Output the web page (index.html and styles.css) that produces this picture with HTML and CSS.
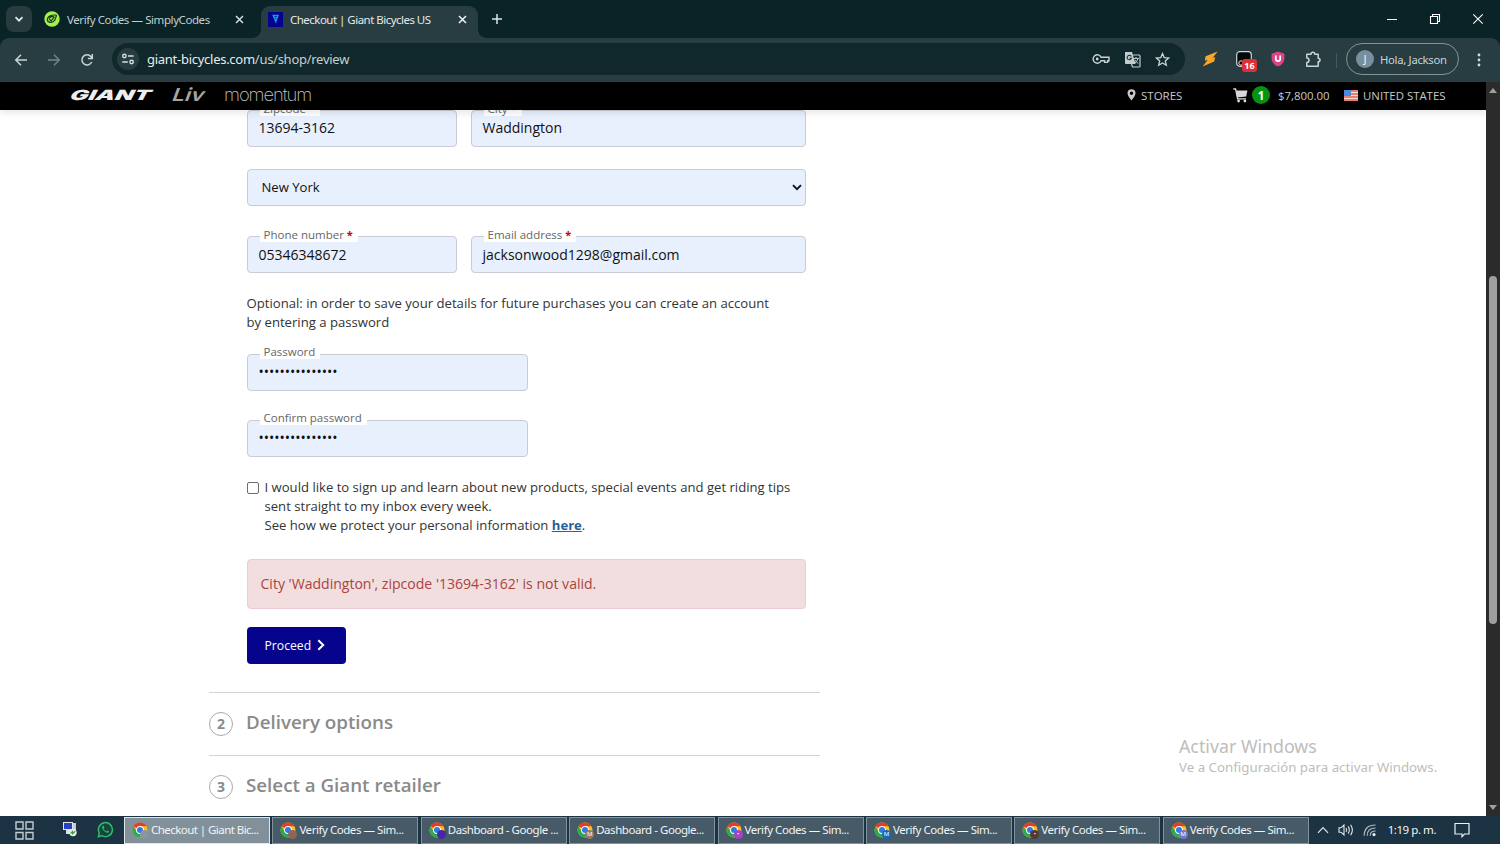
FILE: index.html
```
<!DOCTYPE html>
<html lang="en">
<head>
    <meta charset="UTF-8">
    <meta name="viewport" content="width=device-width, initial-scale=1.0">
    <link rel="stylesheet" href="styles.css">
    <title>Checkout | Giant Bicycles US</title>
</head>
<body>
    <svg class="defs" width="0" height="0">
        <symbol id="chrome" viewBox="0 0 16 16">
            <circle cx="8" cy="8" r="7.5" fill="#fbc116"/>
            <path d="M8 8 L1.5 4.25 A7.5 7.5 0 0 1 14.5 4.25 L8 4.25 Z" fill="#e33b2e"/>
            <path d="M1.5 4.25 A7.5 7.5 0 0 0 8 15.5 L11.2 9.9 L4.8 9.9 Z" fill="#2da94f"/>
            <circle cx="8" cy="8" r="3.9" fill="#fff"/>
            <circle cx="8" cy="8" r="3" fill="#3478e5"/>
        </symbol>
    </svg>

    <!-- Browser tabs -->
    <div class="tab-strip">
        <div class="tab-search">
            <svg width="10" height="10" viewBox="0 0 10 10"><path d="M1.5 3.2 L5 6.7 L8.5 3.2" fill="none" stroke="#e2eaea" stroke-width="1.7"/></svg>
        </div>
        <div class="tab">
            <svg class="favicon" width="16" height="16" viewBox="0 0 16 16">
                <circle cx="8" cy="8" r="7.7" fill="#a6f04c"/>
                <path d="M12.6 4.2 C9 3.6 4 4.6 3.4 8.2 C3 11.6 8.4 12.8 10.8 9.2 L12.6 4.2 M5.2 8.2 L7.2 9.8 L10.2 6.2 M10.4 5.8 C8 5.2 5.8 6 5.4 7.6" fill="none" stroke="#173d18" stroke-width="1.2"/>
            </svg>
            <span class="tab-title">Verify Codes — SimplyCodes</span>
            <svg class="close" width="9" height="9" viewBox="0 0 9 9"><path d="M1 1 L8 8 M8 1 L1 8" stroke="#d5dede" stroke-width="1.5"/></svg>
        </div>
        <div class="tab active">
            <svg class="favicon" width="15" height="15" viewBox="0 0 15 15">
                <rect width="15" height="15" fill="#06038d"/>
                <path d="M4.2 2.8 H11 L7.8 11.6 Z" fill="#1995ee"/>
                <path d="M6.6 4.6 H8.8 M7.2 6.4 H8.2" stroke="#06038d" stroke-width="0.8"/>
            </svg>
            <span class="tab-title">Checkout | Giant Bicycles US</span>
            <svg class="close" width="9" height="9" viewBox="0 0 9 9"><path d="M1 1 L8 8 M8 1 L1 8" stroke="#eef3f3" stroke-width="1.5"/></svg>
        </div>
        <svg class="new-tab" width="12" height="12" viewBox="0 0 12 12"><path d="M6 1 V11 M1 6 H11" stroke="#dde6e6" stroke-width="1.5"/></svg>
        <div class="window-buttons">
            <svg width="12" height="12" viewBox="0 0 12 12"><path d="M1 6.5 H11" stroke="#fff" stroke-width="1"/></svg>
            <svg width="12" height="12" viewBox="0 0 12 12"><path d="M1.5 3.5 H8.5 V10.5 H1.5 Z M3.5 3.5 V1.5 H10.5 V8.5 H8.5" fill="none" stroke="#fff" stroke-width="1.1"/></svg>
            <svg width="12" height="12" viewBox="0 0 12 12"><path d="M1.3 1.3 L10.7 10.7 M10.7 1.3 L1.3 10.7" stroke="#fff" stroke-width="1.1"/></svg>
        </div>
    </div>

    <!-- Toolbar -->
    <div class="toolbar-wrap">
        <div class="toolbar">
            <svg class="nav-icon" width="14" height="14" viewBox="0 0 14 14"><path d="M13 7 H2 M7 1.8 L1.8 7 L7 12.2" fill="none" stroke="#c9d6d6" stroke-width="1.5"/></svg>
            <svg class="nav-icon" width="14" height="14" viewBox="0 0 14 14"><path d="M1 7 H12 M7 1.8 L12.2 7 L7 12.2" fill="none" stroke="#71868a" stroke-width="1.5"/></svg>
            <svg class="nav-icon" width="14" height="14" viewBox="0 0 14 14"><path d="M11.7 9 A5.1 5.1 0 1 1 10.9 3.6 L12.2 5.2 M12.3 1 V5.4 H7.9" fill="none" stroke="#c9d6d6" stroke-width="1.5"/></svg>
            <div class="omnibox">
                <div class="site-info">
                    <svg width="14" height="14" viewBox="0 0 14 14"><g fill="none" stroke="#d5dfdf" stroke-width="1.4"><circle cx="3.4" cy="4" r="1.7"/><path d="M7 4 H12.6 M1.2 10 H6.8"/><circle cx="10.6" cy="10" r="1.7"/></g></svg>
                </div>
                <span class="url">giant-bicycles.com<span>/us/shop/review</span></span>
                <div class="omni-icons">
                    <svg width="18" height="12" viewBox="0 0 18 12"><g fill="none" stroke="#c9d6d6" stroke-width="1.4"><path d="M9.1 4.2 H17 V7.8 H15.6 V9.4 H12.6 V7.8 H9.1 A4.2 4.2 0 1 1 9.1 4.2 Z"/></g><circle cx="5.2" cy="6" r="1.4" fill="#c9d6d6"/></svg>
                    <svg width="17" height="17" viewBox="0 0 17 17"><path d="M1 1 H8 L11.5 13 H1.8 Q1 13 1 12 Z" fill="#c2cece"/><path d="M9 4 H15.2 Q16 4 16 5 V15.2 Q16 16 15 16 H8.5 L7.5 13" fill="none" stroke="#c2cece" stroke-width="1.2"/><path d="M7.3 5.6 A2.2 2.2 0 1 0 7.4 7.3 H5.5" fill="none" stroke="#1c3337" stroke-width="1.1"/><path d="M9.6 7.4 H14.8 M12 6 V7.4 M14 7.6 Q13 10.8 10.8 12.2 M10.8 8.8 Q12 11 14.4 12.6" fill="none" stroke="#c2cece" stroke-width="1"/></svg>
                    <svg width="15" height="15" viewBox="0 0 15 15"><path d="M7.5 1.6 L9.2 5.6 L13.6 6 L10.3 8.9 L11.3 13.2 L7.5 10.9 L3.7 13.2 L4.7 8.9 L1.4 6 L5.8 5.6 Z" fill="none" stroke="#c9d6d6" stroke-width="1.3"/></svg>
                </div>
            </div>
            <svg class="ext bolt" width="16" height="16" viewBox="0 0 16 16"><path d="M15.6 0.6 L3.6 5.2 L2.8 9.8 L5.8 8.8 L0.6 15.6 L12.2 10.4 L13.2 6 L10.6 7 Z" fill="#f9a72b"/></svg>
            <div class="ext counter">
                <svg width="16" height="16" viewBox="0 0 16 16"><rect x="0.7" y="0.7" width="14.6" height="14.6" rx="3" fill="#050808" stroke="#cdd8d8" stroke-width="1.2"/><circle cx="5" cy="12" r="2.2" fill="none" stroke="#eee"/></svg>
                <span class="count">16</span>
            </div>
            <svg class="ext shield" width="14" height="16" viewBox="0 0 14 16"><path d="M7 0.5 L13.4 2.8 V8 Q13 13 7 15.6 Q1 13 0.6 8 V2.8 Z" fill="#df4387"/><path d="M4.8 4.5 V8 Q4.8 10.2 7 10.2 Q9.2 10.2 9.2 8 V4.5" fill="none" stroke="#fff" stroke-width="1.7"/></svg>
            <svg class="ext puzzle" width="17" height="17" viewBox="0 0 17 17"><path d="M1.8 3.2 H6 A1.9 1.9 0 0 1 9.8 3.2 H13.2 V7.2 A1.8 1.8 0 0 1 13.2 10.8 V15.2 H1.8 V11.4 A2.2 2.2 0 0 0 1.8 7 Z" fill="none" stroke="#c9d6d6" stroke-width="1.5" stroke-linejoin="round"/></svg>
            <div class="separator"></div>
            <div class="profile"><span class="avatar">J</span><span class="hello">Hola, Jackson</span></div>
            <svg class="menu" width="4" height="14" viewBox="0 0 4 14" fill="#d5dede"><circle cx="2" cy="2" r="1.4"/><circle cx="2" cy="7" r="1.4"/><circle cx="2" cy="12" r="1.4"/></svg>
        </div>
    </div>

    <div class="viewport">
        <div class="page">
            <header class="site-header">
                <span class="logo giant">GIANT</span>
                <span class="logo liv">Liv</span>
                <span class="logo momentum">momentum</span>
                <div class="header-links">
                    <svg class="pin" width="9" height="12" viewBox="0 0 9 12"><path fill-rule="evenodd" d="M4.5 0.3 A4 4 0 0 1 8.5 4.3 Q8.3 7 4.5 11.6 Q0.7 7 0.5 4.3 A4 4 0 0 1 4.5 0.3 Z M4.5 2.6 A1.7 1.7 0 1 0 4.5 6 A1.7 1.7 0 1 0 4.5 2.6 Z" fill="#c9c9c9"/></svg>
                    <span class="stores">STORES</span>
                    <svg class="cart" width="15" height="15" viewBox="0 0 15 15"><path d="M0.3 1 H2.6 L4.6 10.8 H13" fill="none" stroke="#d8d8d8" stroke-width="1.3"/><path d="M3 2.4 H14.4 L13.2 8.4 L4.2 9.4 Z" fill="#d8d8d8"/><circle cx="5.6" cy="13" r="1.4" fill="#d8d8d8"/><circle cx="11.9" cy="13" r="1.4" fill="#d8d8d8"/></svg>
                    <span class="cart-count">1</span>
                    <span class="total">$7,800.00</span>
                    <svg class="flag" width="14" height="11" viewBox="0 0 14 11"><rect width="14" height="11" fill="#f7dcd6"/><path d="M0 1 H14 M0 4 H14 M0 7 H14 M0 10 H14" stroke="#e2604f" stroke-width="1.6"/><rect width="7" height="6" fill="#4a8be0"/></svg>
                    <span class="country">UNITED STATES</span>
                </div>
            </header>

            <main class="checkout">
                <form class="details">
                    <div class="row first-row">
                        <div class="field short"><label>Zipcode <b>*</b></label><span class="value">13694-3162</span></div>
                        <div class="field long"><label>City <b>*</b></label><span class="value">Waddington</span></div>
                    </div>
                    <div class="row select-row">
                        <div class="field select"><span>New York</span>
                            <svg width="10" height="7" viewBox="0 0 10 7"><path d="M1 1.2 L5 5.2 L9 1.2" fill="none" stroke="#111" stroke-width="1.9"/></svg>
                        </div>
                    </div>
                    <div class="row phone-row">
                        <div class="field short"><label>Phone number <b>*</b></label><span class="value">05346348672</span></div>
                        <div class="field long"><label>Email address <b>*</b></label><span class="value">jacksonwood1298@gmail.com</span></div>
                    </div>
                    <p class="optional">Optional: in order to save your details for future purchases you can create an account<br>by entering a password</p>
                    <div class="field password"><label>Password</label><span class="value dots">•••••••••••••••</span></div>
                    <div class="field password confirm"><label>Confirm password</label><span class="value dots">•••••••••••••••</span></div>
                    <div class="signup">
                        <span class="checkbox"></span>
                        <p>I would like to sign up and learn about new products, special events and get riding tips<br>sent straight to my inbox every week.<br>See how we protect your personal information <a href="#">here</a>.</p>
                    </div>
                    <div class="alert">City 'Waddington', zipcode '13694-3162' is not valid.</div>
                    <button type="button" class="proceed">Proceed
                        <svg width="8" height="12" viewBox="0 0 8 12"><path d="M1.3 1.2 L6.2 6 L1.3 10.8" fill="none" stroke="#fff" stroke-width="2"/></svg>
                    </button>
                </form>
                <section class="step"><span class="number">2</span><h2>Delivery options</h2></section>
                <section class="step"><span class="number">3</span><h2>Select a Giant retailer</h2></section>
            </main>

            <div class="watermark">
                <div class="wm-title">Activar Windows</div>
                <div class="wm-text">Ve a Configuración para activar Windows.</div>
            </div>
        </div>
        <div class="scrollbar">
            <svg width="8" height="5" viewBox="0 0 8 5"><path d="M0 5 L4 0 L8 5 Z" fill="#9f9f9f"/></svg>
            <div class="thumb"></div>
            <svg width="8" height="5" viewBox="0 0 8 5"><path d="M0 0 L4 5 L8 0 Z" fill="#9f9f9f"/></svg>
        </div>
    </div>

    <!-- Windows taskbar -->
    <div class="taskbar">
        <svg class="task-view" width="19" height="19" viewBox="0 0 19 19"><path d="M1 1 H8 V8 H1 Z M11 1 H18 V8 H11 Z M1 11.5 H8 V18 H1 Z M11 11.5 H18 V18 H11 Z" fill="none" stroke="#c5ccd0" stroke-width="1.4"/></svg>
        <svg class="remote" width="16" height="16" viewBox="0 0 16 16"><rect x="1" y="1" width="10" height="8" fill="#e1e5ea"/><rect x="2" y="2" width="8" height="6" fill="#2444c5"/><path d="M4 9 H9 L11 13 H4 Z" fill="#dde1e5"/><rect x="11" y="2" width="3" height="9" fill="#c8cdd3"/><circle cx="11" cy="11.6" r="3.7" fill="#e9f2e6"/><path d="M8.6 12.5 L10.6 10.4 V12.7 L13.4 10.2" fill="none" stroke="#3d9c38" stroke-width="1.2"/></svg>
        <svg class="whatsapp" width="17" height="17" viewBox="0 0 17 17"><path d="M1.3 15.7 L2.3 12 A7 7 0 1 1 5 14.7 Z" fill="#17443e" stroke="#2cbd68" stroke-width="1.5"/><path d="M6 4.8 Q4.7 5.6 5.2 7.3 Q6.4 10.5 9.6 11.8 Q11.6 12.1 12.2 10.4 L10.3 9.4 L9.3 10.4 Q7.4 9.5 6.6 7.8 L7.4 6.8 L6.7 4.8 Z" fill="#2cbd68"/></svg>
        <div class="tasks">
            <div class="task current"><svg width="16" height="16"><use href="#chrome"/></svg><i class="badge grey"></i><span>Checkout | Giant Bic...</span></div>
            <div class="task"><svg width="16" height="16"><use href="#chrome"/></svg><i class="badge brown"></i><span>Verify Codes — Sim...</span></div>
            <div class="task"><svg width="16" height="16"><use href="#chrome"/></svg><i class="badge indigo"></i><span>Dashboard - Google ...</span></div>
            <div class="task"><svg width="16" height="16"><use href="#chrome"/></svg><i class="badge tan">M</i><span>Dashboard - Google...</span></div>
            <div class="task"><svg width="16" height="16"><use href="#chrome"/></svg><i class="badge purple">•</i><span>Verify Codes — Sim...</span></div>
            <div class="task"><svg width="16" height="16"><use href="#chrome"/></svg><i class="badge blue">M</i><span>Verify Codes — Sim...</span></div>
            <div class="task"><svg width="16" height="16"><use href="#chrome"/></svg><i class="badge dark">•</i><span>Verify Codes — Sim...</span></div>
            <div class="task"><svg width="16" height="16"><use href="#chrome"/></svg><i class="badge violet">M</i><span>Verify Codes — Sim...</span></div>
        </div>
        <div class="tray">
            <svg width="12" height="8" viewBox="0 0 12 8"><path d="M1 6.8 L6 1.6 L11 6.8" fill="none" stroke="#e2e7ea" stroke-width="1.2"/></svg>
            <svg class="volume" width="17" height="14" viewBox="0 0 17 14"><g fill="none" stroke="#e2e7ea" stroke-width="1.1"><path d="M1 4.8 H3 L6 2 V12 L3 9.2 H1 Z M8 5 Q9.3 7 8 9 M10.2 3.4 Q12.4 7 10.2 10.6 M12.6 1.8 Q16.2 7 12.6 12.2"/></g></svg>
            <svg class="wifi" width="14" height="14" viewBox="0 0 14 14"><g fill="none" stroke="#aebbc2" stroke-width="1.2"><path d="M1.2 12.8 Q1.2 2 12.6 2 M4.2 12.8 Q4.2 5 12.6 5 M7.2 12.8 Q7.2 8 12.6 8"/></g><circle cx="11" cy="11.6" r="1.6" fill="#e9edef"/></svg>
            <span class="clock">1:19 p. m.</span>
            <svg class="notes" width="16" height="16" viewBox="0 0 16 16"><path d="M1 1.5 H15 V12 H10.5 L8 14.7 V12 H1 Z" fill="none" stroke="#eef1f3" stroke-width="1.2"/></svg>
        </div>
    </div>
</body>
</html>
```
FILE: styles.css
```
* {
    box-sizing: border-box;
}

body {
    display: flex;
    flex-direction: column;
    width: 1500px;
    height: 844px;
    margin: 0;
    overflow: hidden;
    font-family: 'Open Sans', sans-serif;
    background-color: #fff;
    color: #333;
}

svg {
    display: block;
    flex: none;
}

.defs {
    position: absolute;
}

/* Tabs */
.tab-strip {
    display: flex;
    align-items: flex-start;
    height: 38px;
    padding-left: 6px;
    background-color: #0a2326;
    font-family: 'Noto Sans', sans-serif;
}

.tab-search {
    display: flex;
    align-items: center;
    justify-content: center;
    width: 26px;
    height: 26px;
    margin-top: 6px;
    border-radius: 8px;
    background-color: #283c40;
}

.tab {
    display: flex;
    align-items: center;
    width: 229px;
    height: 32px;
    margin-top: 6px;
    padding: 0 17px 6px 12px;
    font-size: 11.5px;
    letter-spacing: -0.42px;
    color: #c3cfd0;
    white-space: nowrap;
}

.tab.active {
    position: relative;
    width: 217px;
    padding: 0 11px 6px 7px;
    border-radius: 9px 9px 0 0;
    background-color: #283d41;
    color: #e3eaea;
    letter-spacing: -0.52px;
}

/* curved feet of the active tab */
.tab.active::before,
.tab.active::after {
    content: '';
    position: absolute;
    bottom: 0;
    width: 8px;
    height: 8px;
}

.tab.active::before {
    left: -8px;
    background: radial-gradient(circle at 0 0, #0a2326 7.5px, #283d41 8px);
}

.tab.active::after {
    right: -8px;
    background: radial-gradient(circle at 100% 0, #0a2326 7.5px, #283d41 8px);
}

.tab-title {
    flex: 1;
    margin-left: 7px;
}

.new-tab {
    margin: 13px 0 0 13px;
}

.window-buttons {
    display: flex;
    gap: 31px;
    margin: 13px 16px 0 auto;
}

/* Toolbar */
.toolbar-wrap {
    height: 44px;
    background-color: #0a2326;
}

.toolbar {
    display: flex;
    align-items: center;
    height: 44px;
    padding-left: 14px;
    border-radius: 9px 9px 0 0;
    background-color: #283d41;
}

.nav-icon {
    margin-top: -1px;
    margin-right: 19px;
}

.nav-icon:nth-child(3) {
    margin-right: 18px;
}

.omnibox {
    display: flex;
    align-items: center;
    width: 1073px;
    height: 32px;
    margin-top: -2px;
    padding: 0 15px 0 5px;
    border-radius: 16px;
    background-color: #10272b;
}

.site-info {
    display: flex;
    align-items: center;
    justify-content: center;
    width: 22px;
    height: 22px;
    border-radius: 50%;
    background-color: #283d41;
}

.url {
    margin-left: 8px;
    font-family: 'Noto Sans', sans-serif;
    font-size: 13px;
    letter-spacing: -0.27px;
    color: #e6eded;
}

.url span {
    color: #c6d1d2;
}

.omni-icons {
    display: flex;
    align-items: center;
    gap: 14px;
    margin-left: auto;
}

.ext {
    margin-top: -2px;
}

.bolt {
    margin-left: 17px;
}

.counter {
    position: relative;
    margin-left: 18px;
}

.count {
    position: absolute;
    left: 6px;
    top: 8px;
    width: 15px;
    height: 13px;
    border-radius: 3px;
    background-color: #e02e35;
    color: #fff;
    font-size: 9px;
    font-weight: bold;
    line-height: 13px;
    text-align: center;
}

.shield {
    margin-left: 19px;
}

.puzzle {
    margin-left: 20px;
}

.separator {
    width: 1px;
    height: 15px;
    margin: 0 9px 0 14px;
    background-color: #46595d;
}

.profile {
    display: flex;
    align-items: center;
    width: 113px;
    height: 32px;
    margin-top: -2px;
    padding-left: 9px;
    border: 1px solid #849397;
    border-radius: 16px;
}

.avatar {
    width: 18px;
    height: 18px;
    border-radius: 50%;
    background-color: #788f9d;
    color: #fff;
    font-size: 10px;
    line-height: 18px;
    text-align: center;
}

.hello {
    margin-left: 6px;
    font-family: 'Noto Sans', sans-serif;
    font-size: 11.3px;
    letter-spacing: -0.3px;
    color: #c6d2d4;
    white-space: nowrap;
}

.menu {
    margin-left: 18px;
    margin-top: -1px;
}

/* Page */
.viewport {
    display: flex;
    height: 734px;
}

.page {
    position: relative;
    width: 1486px;
    overflow: hidden;
}

.site-header {
    position: relative;
    z-index: 2;
    display: flex;
    align-items: center;
    height: 28px;
    padding: 0 0 2px 71px;
    background-color: #000;
    box-shadow: 0 2px 8px rgba(0, 0, 0, 0.12);
    color: #c8c8c8;
    font-size: 11.7px;
    white-space: nowrap;
}

.logo {
    line-height: 26px;
    transform-origin: left center;
}

.giant {
    width: 102px;
    font-family: Inter, sans-serif;
    font-size: 14px;
    font-weight: 900;
    color: #eee;
    transform: skewX(-28deg) scaleX(1.74);
}

.liv {
    width: 51px;
    font-family: Inter, sans-serif;
    font-size: 18px;
    font-weight: 600;
    color: #a5a5a5;
    transform: skewX(-20deg) scaleX(1.25);
}

.momentum {
    font-family: Inter, sans-serif;
    font-size: 17px;
    font-weight: 200;
    color: #c0c0c0;
    letter-spacing: -1px;
    transform: scaleX(1.08);
}

.header-links {
    display: flex;
    align-items: center;
    margin-left: auto;
    padding-right: 42px;
}

.stores {
    width: 41px;
    margin: 0 51px 0 5px;
    font-size: 11.5px;
}

.cart-count {
    width: 18px;
    height: 18px;
    margin: 0 8px 0 4px;
    border-radius: 50%;
    background-color: #079311;
    color: #fff;
    font-weight: bold;
    line-height: 18px;
    text-align: center;
}

.total {
    width: 52px;
    font-size: 11.4px;
}

.flag {
    margin: 0 5px 0 14px;
}

.country {
    width: 81px;
    font-size: 11.4px;
}

.checkout {
    width: 611px;
    margin-left: 209px;
}

.details {
    height: 582px;
    padding-left: 37.5px;
}

.row {
    display: flex;
    gap: 14px;
}

.field {
    position: relative;
    height: 37px;
    border: 1px solid #c9ccd3;
    border-radius: 4px;
    background-color: #e8f0fe;
}

.short {
    width: 210px;
}

.long {
    width: 335px;
}

/* label sits on the top border of its field */
.field label {
    position: absolute;
    left: 12px;
    top: -10px;
    height: 15px;
    padding: 0 5px 0 4px;
    background-color: #fff;
    color: #666;
    font-size: 11.5px;
    line-height: 15px;
    white-space: nowrap;
}

.field label b {
    color: #c00;
    font-size: 11px;
}

.value {
    display: block;
    padding-left: 11px;
    color: #111;
    font-size: 14px;
    line-height: 35px;
}

.first-row .value {
    line-height: 33px;
}

.select-row {
    margin-top: 22px;
}

.select {
    display: flex;
    align-items: center;
    justify-content: space-between;
    width: 559px;
    padding: 0 3px 1px 14px;
    color: #111;
    font-size: 13.1px;
}

.phone-row {
    margin-top: 30px;
}

.optional {
    margin: 21px 0 0;
    font-size: 13.13px;
    line-height: 19px;
    white-space: nowrap;
}

.password {
    width: 281px;
    margin-top: 22px;
}

.password label {
    top: -11px;
}

.confirm {
    margin-top: 29px;
}

.dots {
    font-size: 14px;
    line-height: 34px;
}

.signup {
    display: flex;
    margin-top: 21px;
}

.checkbox {
    width: 12px;
    height: 12px;
    margin-top: 4px;
    border: 1px solid #6d6d6d;
    border-radius: 2px;
}

.signup p {
    margin: 0 0 0 6px;
    font-size: 13.12px;
    line-height: 18.8px;
    white-space: nowrap;
}

.signup a {
    color: #23629f;
    font-weight: bold;
}

.alert {
    width: 559px;
    height: 50px;
    margin-top: 24.6px;
    padding-left: 13px;
    border: 1px solid #ebccd1;
    border-radius: 4px;
    background-color: #f2dede;
    color: #a94442;
    font-size: 14.06px;
    line-height: 48px;
}

.proceed {
    display: flex;
    align-items: center;
    gap: 6px;
    width: 99px;
    height: 37px;
    margin-top: 18px;
    padding: 0 0 0 18px;
    border: none;
    border-radius: 4px;
    background-color: #06038d;
    color: #fff;
    font-family: inherit;
    font-size: 12.2px;
}

.step {
    display: flex;
    height: 63px;
    border-top: 1px solid #d3d3d3;
    color: #8a8a8a;
}

.number {
    width: 24px;
    height: 24px;
    margin: 19px 13px 0 0;
    border: 1px solid #aaa;
    border-radius: 50%;
    font-size: 14px;
    font-weight: bold;
    line-height: 22px;
    text-align: center;
}

.step h2 {
    margin: 0;
    font-size: 18.75px;
    font-weight: 600;
    line-height: 58px;
}

.watermark {
    position: absolute;
    left: 1179px;
    top: 652px;
    color: #bdbdbd;
    font-family: 'Noto Sans', sans-serif;
    white-space: nowrap;
}

.wm-title {
    font-size: 17.8px;
    line-height: 24px;
}

.wm-text {
    font-size: 13.3px;
    line-height: 18px;
}

.scrollbar {
    display: flex;
    flex-direction: column;
    align-items: center;
    width: 14px;
    padding: 6px 0;
    background-color: #2b2b2b;
}

.thumb {
    width: 8px;
    height: 348px;
    margin: 183px 0 auto;
    border-radius: 4px;
    background-color: #9f9f9f;
}

/* Taskbar */
.taskbar {
    display: flex;
    align-items: center;
    height: 28px;
    padding-left: 15px;
    background-color: #1b3342;
    font-family: 'Noto Sans', sans-serif;
    font-size: 11.5px;
    letter-spacing: -0.45px;
    color: #f2f5f6;
    white-space: nowrap;
}

.remote {
    margin-left: 28px;
    margin-top: -2px;
}

.whatsapp {
    margin: -1px 10px 0 19px;
}

.tasks {
    display: flex;
    gap: 2.4px;
}

.task {
    position: relative;
    display: flex;
    align-items: center;
    width: 146px;
    height: 27px;
    padding: 0 0 1px 7px;
    border: 1px solid #81939d;
    background-color: #465b67;
}

.task.current {
    border-color: #e1e6e9;
    background-color: #82909a;
    letter-spacing: -0.55px;
}

.task span {
    margin-left: 3px;
    margin-top: -1px;
}

.badge {
    position: absolute;
    left: 15px;
    top: 12px;
    width: 9px;
    height: 9px;
    border-radius: 50%;
    color: #fff;
    font-size: 6px;
    font-style: normal;
    letter-spacing: 0;
    line-height: 9px;
    text-align: center;
}

.grey { background-color: #8798a4; }
.brown { background-color: #8c6658; }
.indigo { background-color: #4926a8; }
.tan { background-color: #9b7765; }
.purple { background-color: #a544c8; }
.blue { background-color: #1668b8; }
.dark { background-color: #553832; }
.violet { background-color: #7579cc; }

.tray {
    display: flex;
    align-items: center;
    margin: -1px 0 0 8px;
}

.volume {
    margin-left: 9px;
}

.wifi {
    margin-left: 8px;
}

.clock {
    width: 47px;
    margin: 0 19px 0 11px;
}
```
